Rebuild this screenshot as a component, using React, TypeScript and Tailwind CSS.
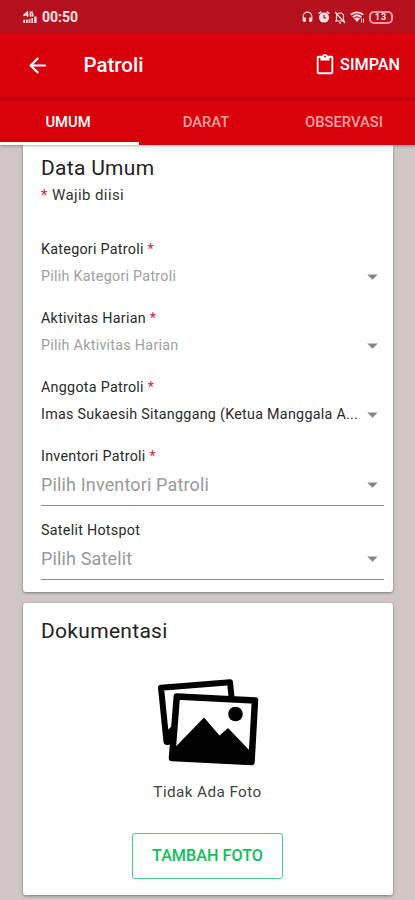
import { MdArrowBack, MdArrowDropDown, MdContentPaste, MdHeadset } from "react-icons/md";

const fields = [
  { label: "Kategori Patroli", value: "Pilih Kategori Patroli", filled: false },
  { label: "Aktivitas Harian", value: "Pilih Aktivitas Harian", filled: false },
  { label: "Anggota Patroli", value: "Imas Sukaesih Sitanggang (Ketua Manggala A...", filled: true },
];

const outlinedFields = [
  { label: "Inventori Patroli", value: "Pilih Inventori Patroli", required: true },
  { label: "Satelit Hotspot", value: "Pilih Satelit", required: false },
];

function StatusBar() {
  return (
    <div className="flex h-[33px] shrink-0 items-center justify-between bg-[#b5101d] pt-px pl-[23px] pr-[22px] text-[#ffe3e3]">
      <div className="flex items-center gap-[5px]">
        <svg width="14" height="12" viewBox="0 0 14 12" fill="none" stroke="currentColor">
          <path d="M4.500 6V.7L1 4h4.500M10 1.200H7.300v3.600h2.500V3H8.500" strokeWidth="1.300" />
          <path d="M1.200 8.800V12M3.800 8.500V12M6.500 8V12M9.200 7v5" strokeWidth="1.700" />
          <path d="M12.400 5.500V12" strokeWidth="2.400" />
        </svg>
        <span className="text-[14px] leading-none font-bold">00:50</span>
      </div>
      <div className="flex items-center gap-[4px]">
        <MdHeadset className="size-[13px]" />
        <svg width="12" height="12" viewBox="0 0 12 12" fill="none" stroke="currentColor">
          <circle cx="6" cy="6.600" r="5" fill="currentColor" stroke="none" />
          <path d="M.8 2.600 3.200.8M11.200 2.600 8.800.8" strokeWidth="1.800" />
          <path d="M6 3.800v3h2" stroke="#b5101d" strokeWidth="1.200" />
        </svg>
        <svg width="12" height="13" viewBox="0 0 12 13" fill="none" stroke="currentColor" strokeWidth="1.200">
          <path d="M2.500 9.800V5.500C2.500 3.500 4 2 6 2s3.500 1.500 3.500 3.500v4.300M1 10h10M5 11.900h2M1 1l10 11" />
        </svg>
        <svg width="15" height="12" viewBox="0 0 15 12" fill="none" stroke="currentColor">
          <path d="M.8 3.800C4.300.6 9.700.6 13.200 3.800" strokeWidth="1.900" />
          <path d="M2.800 6.200c2.500-2.200 5.900-2.200 8.400 0" strokeWidth="1.900" />
          <path d="M4 7.500c1.800-1.500 4.200-1.500 6 0l-3 3.500z" fill="currentColor" stroke="none" />
          <path d="M11.500 7.500v4M13.500 7.500v4" strokeWidth="1" />
        </svg>
        <div className="flex h-[13px] w-[24px] items-center justify-center rounded-[5px] border-2 border-[#eb9ba1] text-[9px] leading-none font-bold tracking-[1px]">
          13
        </div>
      </div>
    </div>
  );
}

function Label({ text, required }: { text: string; required: boolean }) {
  return (
    <div className="text-[14.3px] leading-[18px] tracking-[0.28px] text-[#2a2a2a]">
      {text}
      {required && <span className="text-[#e0213c]"> *</span>}
    </div>
  );
}

function PhotosIcon() {
  return (
    <svg width="102" height="88" viewBox="0 0 102 88" fill="none">
      <path
        d="M14 62.500 9.500 63 4 8.800 73 3.300 74.500 18"
        stroke="#000"
        strokeWidth="6"
        strokeLinejoin="round"
      />
      <path d="M8 53.500 16 46v19H9z" fill="#000" />
      <path
        d="M19.800 17.500 98 21.500 94.500 83 15 79z"
        fill="#fff"
        stroke="#000"
        strokeWidth="6.500"
        strokeLinejoin="round"
      />
      <path d="M15 71.500 47 38.500 62.500 56.500 71 49 95 74v10l-80-5z" fill="#000" />
      <circle cx="78.500" cy="35" r="7.300" fill="#000" />
    </svg>
  );
}

export default function App() {
  return (
    <div className="flex h-[900px] w-[415px] flex-col overflow-hidden bg-[#cfc6c5] font-[Roboto,sans-serif]">
      <StatusBar />

      <header className="flex h-[65px] shrink-0 items-center bg-[#d9000b] pb-px pl-[25px] pr-[15px] text-white">
        <MdArrowBack className="size-[25px]" />
        <h1 className="ml-[33.5px] text-[20.5px] font-medium">Patroli</h1>
        <button className="ml-auto flex items-center gap-[4px] text-[16.2px] font-medium">
          <MdContentPaste className="size-[22px]" />
          SIMPAN
        </button>
      </header>

      <nav className="z-10 h-[47px] shrink-0 bg-[#d9000b] bg-linear-to-b from-[#b8000c] to-[#d9000b] to-[4px] text-[14.8px] font-medium shadow-[0_1px_3px_rgba(0,0,0,0.3)]">
        <div className="grid h-full grid-cols-[139px_137px_139px]">
          <button className="border-b-3 border-white pt-[4px] pr-[3px] text-white">UMUM</button>
          <button className="pt-px pr-[3px] text-[#f7a3a5]">DARAT</button>
          <button className="pt-px pr-[3px] text-[#f7a3a5]">OBSERVASI</button>
        </div>
      </nav>

      <main className="px-[22.5px]">
        <section className="flex h-[447px] flex-col rounded-b-[3px] bg-white pt-[11px] pr-[8.5px] pl-[18.5px] shadow-[0_1px_3px_rgba(0,0,0,0.4)]">
          <h2 className="text-[21px] leading-[25px] tracking-[0.3px] text-[#222]">Data Umum</h2>
          <p className="mt-[4px] text-[15px] leading-[20px] tracking-[0.4px] text-[#333]">
            <span className="text-[#e0213c]">*</span> Wajib diisi
          </p>

          <div className="mt-[35px]">
            {fields.map((field) => (
              <div key={field.label} className="h-[69px]">
                <Label text={field.label} required />
                <div
                  className={`mt-[9px] flex h-[18px] items-center justify-between text-[14.3px] tracking-[0.28px] whitespace-nowrap ${
                    field.filled ? "text-[#2a2a2a]" : "text-[#a0a0a0]"
                  }`}
                >
                  <span className="pt-[2px]">{field.value}</span>
                  <MdArrowDropDown className="-mr-px size-[25px] shrink-0 text-[#858585]" />
                </div>
              </div>
            ))}
            {outlinedFields.map((field) => (
              <div key={field.label} className="h-[74px]">
                <Label text={field.label} required={field.required} />
                <div className="flex h-[41px] items-center justify-between border-b border-[#8c8c8c] pb-px text-[18px] tracking-[0.15px] text-[#999]">
                  {field.value}
                  <MdArrowDropDown className="-mr-px size-[25px] shrink-0 text-[#858585]" />
                </div>
              </div>
            ))}
          </div>
        </section>

        <section className="mt-[11px] flex h-[292px] flex-col items-center rounded-[3px] bg-white pt-[16px] shadow-[0_1px_3px_rgba(0,0,0,0.4)]">
          <h2 className="self-start pl-[18.5px] text-[21px] leading-[25px] tracking-[0.3px] text-[#222]">
            Dokumentasi
          </h2>
          <div className="mt-[35px]">
            <PhotosIcon />
          </div>
          <p className="mt-[15px] text-[15.3px] leading-[20px] tracking-[0.4px] text-[#444]">Tidak Ada Foto</p>
          <button className="mt-[31px] h-[46px] w-[151px] rounded-[3px] border border-[#4fc98a] text-[16.2px] font-medium text-[#0cc25a]">
            TAMBAH FOTO
          </button>
        </section>
      </main>
    </div>
  );
}
